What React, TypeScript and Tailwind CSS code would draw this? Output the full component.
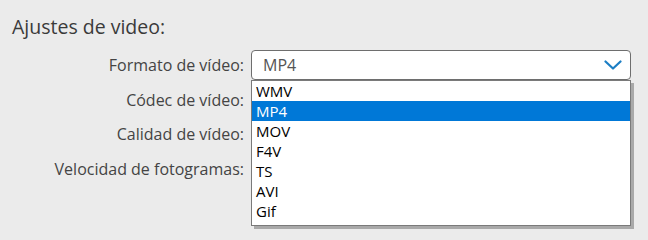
const FORMATS = ["WMV", "MP4", "MOV", "F4V", "TS", "AVI", "Gif"];
const LABELS = ["Formato de vídeo:", "Códec de vídeo:", "Calidad de vídeo:", "Velocidad de fotogramas:"];

function Chevron() {
  return (
    <svg width="18" height="10" viewBox="0 0 18 10" fill="none" className="text-[#1c7ec4]">
      <polyline points="1.5,1.5 9,8.5 16.5,1.5" stroke="currentColor" strokeWidth="2.2" strokeLinecap="round" strokeLinejoin="round" />
    </svg>
  );
}

export default function App() {
  return (
    <div
      className="w-[648px] h-[240px] bg-[#ebebeb] pl-[12px] pt-[13px] overflow-hidden"
      style={{ fontFamily: "'Open Sans', sans-serif" }}
    >
      <h2 className="text-[19.5px] leading-[28px] text-[#3a3a3a]">Ajustes de video:</h2>
      <div className="mt-[9px] grid grid-cols-[232px_380px] gap-x-[7px]">
        {LABELS.map((label, i) => (
          <div key={label} className="contents">
            <div className="h-[34.5px] flex items-start pt-[4px] justify-end text-[16px] leading-[22px] text-[#444]">
              {label}
            </div>
            <div className="h-[34.5px] relative">
              {i === 0 && (
                <>
                  <div className="h-[30px] rounded-[4px] border border-[#6e6e6e] bg-white flex items-center pl-[11px] pr-[8px] text-[16px] text-[#555]">
                    <span className="flex-1">MP4</span>
                    <Chevron />
                  </div>
                  <ul className="absolute left-0 top-[30px] w-[380px] z-10 border border-[#7a7a7a] bg-white pb-[4px] shadow-[3px_3px_0_rgba(0,0,0,0.28)] text-[15px] leading-[20px] text-black">
                    {FORMATS.map((f) => (
                      <li
                        key={f}
                        className={f === "MP4" ? "h-[20px] pl-[4px] bg-[#0078d7] text-white" : "h-[20px] pl-[4px]"}
                      >
                        {f}
                      </li>
                    ))}
                  </ul>
                </>
              )}
            </div>
          </div>
        ))}
      </div>
    </div>
  );
}
